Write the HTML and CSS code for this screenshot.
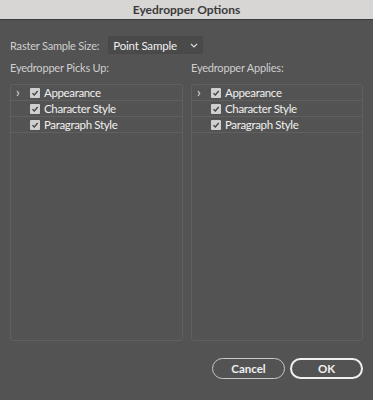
FILE: index.html
```html
<!DOCTYPE html>
<html lang="en">
<head>
    <meta charset="UTF-8">
    <meta name="viewport" content="width=device-width, initial-scale=1.0">
    <title>Eyedropper Options</title>
    <link rel="stylesheet" href="styles.css">
</head>
<body>

<div class="titlebar">Eyedropper Options</div>

<div class="dialog">
    <div class="sample-row">
        <span class="label">Raster Sample Size:</span>
        <div class="select">
            <span>Point Sample</span>
            <svg width="8" height="5" viewBox="0 0 8 5"><path d="M1 1 L4 4 L7 1" fill="none" stroke="#d8d8d8" stroke-width="1.2"/></svg>
        </div>
    </div>

    <div class="columns">
        <div class="column">
            <div class="label">Eyedropper Picks Up:</div>
            <div class="panel">
                <div class="item">
                    <span class="twisty">&#8250;</span>
                    <span class="check"><svg width="10" height="10" viewBox="0 0 10 10"><path d="M2.5 5.2 L4.3 7 L7.7 3" fill="none" stroke="#444" stroke-width="1.3"/></svg></span>
                    <span>Appearance</span>
                </div>
                <div class="item">
                    <span class="twisty"></span>
                    <span class="check"><svg width="10" height="10" viewBox="0 0 10 10"><path d="M2.5 5.2 L4.3 7 L7.7 3" fill="none" stroke="#444" stroke-width="1.3"/></svg></span>
                    <span>Character Style</span>
                </div>
                <div class="item">
                    <span class="twisty"></span>
                    <span class="check"><svg width="10" height="10" viewBox="0 0 10 10"><path d="M2.5 5.2 L4.3 7 L7.7 3" fill="none" stroke="#444" stroke-width="1.3"/></svg></span>
                    <span>Paragraph Style</span>
                </div>
            </div>
        </div>
        <div class="column">
            <div class="label">Eyedropper Applies:</div>
            <div class="panel">
                <div class="item">
                    <span class="twisty">&#8250;</span>
                    <span class="check"><svg width="10" height="10" viewBox="0 0 10 10"><path d="M2.5 5.2 L4.3 7 L7.7 3" fill="none" stroke="#444" stroke-width="1.3"/></svg></span>
                    <span>Appearance</span>
                </div>
                <div class="item">
                    <span class="twisty"></span>
                    <span class="check"><svg width="10" height="10" viewBox="0 0 10 10"><path d="M2.5 5.2 L4.3 7 L7.7 3" fill="none" stroke="#444" stroke-width="1.3"/></svg></span>
                    <span>Character Style</span>
                </div>
                <div class="item">
                    <span class="twisty"></span>
                    <span class="check"><svg width="10" height="10" viewBox="0 0 10 10"><path d="M2.5 5.2 L4.3 7 L7.7 3" fill="none" stroke="#444" stroke-width="1.3"/></svg></span>
                    <span>Paragraph Style</span>
                </div>
            </div>
        </div>
    </div>

    <div class="buttons">
        <button class="btn">Cancel</button>
        <button class="btn primary">OK</button>
    </div>
</div>

</body>
</html>
```

FILE: styles.css
```css
body {
    margin: 0;
    width: 373px;
    height: 400px;
    background-color: #535353;
    font-family: Lato, "Open Sans", sans-serif;
    font-size: 11px;
    letter-spacing: -0.2px;
    color: #d2d2d2;
    overflow: hidden;
}
.titlebar {
    height: 19px;
    line-height: 19px;
    background-color: #d8d5d5;
    border-bottom: 1px solid #3c3c3c;
    text-align: center;
    font-weight: bold;
    font-size: 12px;
    letter-spacing: 0;
    color: #3a3a3a;
}
.dialog {
    padding: 17px 10px 0 10px;
}
.sample-row {
    display: flex;
    align-items: center;
    gap: 9px;
    height: 16px;
}
.label {
    color: #cfcfcf;
}
.select {
    width: 85px;
    height: 16px;
    padding: 0 4px;
    background-color: #4a4a4a;
    border: 1px solid #484848;
    border-radius: 2px;
    display: flex;
    align-items: center;
    justify-content: space-between;
    color: #f0f0f0;
    font-size: 11.5px;
}
.columns {
    display: grid;
    grid-template-columns: 173px 172px;
    gap: 8px;
    margin-top: 8px;
}
.column .label {
    height: 14px;
    line-height: 14px;
    margin-bottom: 9px;
}
.panel {
    height: 255px;
    border: 1px solid #606060;
    border-radius: 3px;
}
.item {
    height: 15px;
    border-bottom: 1px solid #606060;
    display: flex;
    align-items: center;
    color: #f0f0f0;
    font-size: 11.5px;
    letter-spacing: -0.35px;
}
.twisty {
    width: 19px;
    padding-left: 5px;
    box-sizing: border-box;
    font-size: 13px;
    line-height: 15px;
    color: #e0e0e0;
}
.check {
    width: 10px;
    height: 10px;
    background-color: #cfcfcf;
    border-radius: 1px;
    margin-right: 4px;
    display: flex;
}
.buttons {
    display: flex;
    justify-content: flex-end;
    gap: 5px;
    margin-top: 17px;
}
.btn {
    width: 73px;
    height: 21px;
    border-radius: 11px;
    background-color: transparent;
    border: 1px solid #c8c8c8;
    color: #f0f0f0;
    font-family: Lato, "Open Sans", sans-serif;
    font-size: 11.5px;
    font-weight: bold;
    padding: 0;
}
.btn.primary {
    border: 2px solid #f0f0f0;
}
```
